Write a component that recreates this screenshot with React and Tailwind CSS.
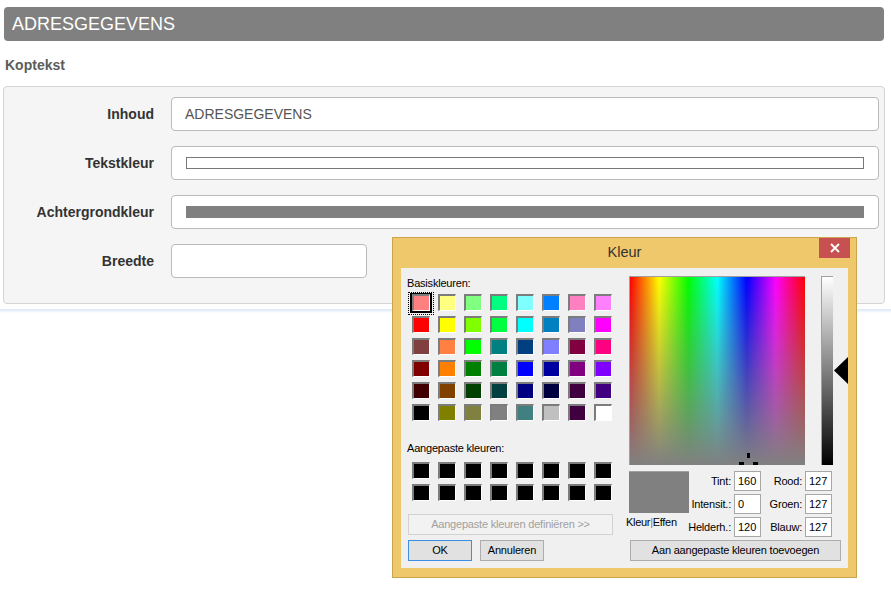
import React from "react";

const BASIC = [
  ["bg-[#ff8080]", "bg-[#ffff80]", "bg-[#80ff80]", "bg-[#00ff80]", "bg-[#80ffff]", "bg-[#0080ff]", "bg-[#ff80c0]", "bg-[#ff80ff]"],
  ["bg-[#ff0000]", "bg-[#ffff00]", "bg-[#80ff00]", "bg-[#00ff40]", "bg-[#00ffff]", "bg-[#0080c0]", "bg-[#8080c0]", "bg-[#ff00ff]"],
  ["bg-[#804040]", "bg-[#ff8040]", "bg-[#00ff00]", "bg-[#008080]", "bg-[#004080]", "bg-[#8080ff]", "bg-[#800040]", "bg-[#ff0080]"],
  ["bg-[#800000]", "bg-[#ff8000]", "bg-[#008000]", "bg-[#008040]", "bg-[#0000ff]", "bg-[#0000a0]", "bg-[#800080]", "bg-[#8000ff]"],
  ["bg-[#400000]", "bg-[#804000]", "bg-[#004000]", "bg-[#004040]", "bg-[#000080]", "bg-[#000040]", "bg-[#400040]", "bg-[#400080]"],
  ["bg-[#000000]", "bg-[#808000]", "bg-[#808040]", "bg-[#808080]", "bg-[#408080]", "bg-[#c0c0c0]", "bg-[#400040]", "bg-[#ffffff]"],
];

function Swatch({ color, selected }) {
  return (
    <div className="relative w-[18px] h-[17px]">
      {selected && (
        <>
          <span className="absolute -left-[4px] -right-[4px] -top-[2px] -bottom-[4px] border border-dotted border-black" />
          <span className="absolute -left-[2px] -right-[2px] -top-[1px] -bottom-[2px] border-2 border-black" />
        </>
      )}
      <div
        className={`relative w-[18px] h-[17px] border-t-2 border-l-2 border-t-[#7c7c7c] border-l-[#7c7c7c] border-r border-b border-r-white border-b-white ${color}`}
      />
    </div>
  );
}

function FormRow({ label, children }) {
  return (
    <div className="flex items-center h-[34px]">
      <div className="w-[150px] text-right text-[14px] font-bold text-[#333]">{label}</div>
      <div className="ml-[17px]">{children}</div>
    </div>
  );
}

function WinButton({ children, className = "" }) {
  return (
    <div
      className={`flex items-center justify-center h-[21px] border text-[11px] tracking-[-0.2px] ${className}`}
    >
      {children}
    </div>
  );
}

function Field({ label, value }) {
  return (
    <>
      <div className="h-[20px] flex items-center justify-end pr-[3px] text-[11px] tracking-[-0.2px] text-black">{label}</div>
      <div className="h-[20px] flex items-center border border-[#a7a7a7] bg-white pl-[3px] text-[11px] text-black">{value}</div>
    </>
  );
}

export default function App() {
  return (
    <div className="relative w-[891px] h-[590px] overflow-hidden bg-white font-['Liberation_Sans',Arial,sans-serif]">
      <div className="ml-[4px] mt-[7px] w-[880px] h-[34px] rounded-[4px] bg-[#808080] px-[8px] text-[18px] leading-[34px] text-white">
        ADRESGEGEVENS
      </div>
      <div className="ml-[5px] mt-[14px] h-[20px] leading-[20px] text-[14px] font-bold text-[#5c5c5c]">Koptekst</div>
      <div className="ml-[3px] mt-[11px] w-[882px] h-[218px] rounded-[4px] border border-[#d5d5d5] bg-[#f5f5f5] pt-[10px] flex flex-col gap-[15px]">
        <FormRow label="Inhoud">
          <div className="flex items-center h-[34px] w-[708px] rounded-[4px] border border-[#bababa] bg-white px-[13px] text-[14px] text-[#555]">
            ADRESGEGEVENS
          </div>
        </FormRow>
        <FormRow label="Tekstkleur">
          <div className="flex items-center h-[34px] w-[708px] rounded-[4px] border border-[#bababa] bg-white px-[14px]">
            <div className="h-[12px] flex-1 border border-[#777] bg-white" />
          </div>
        </FormRow>
        <FormRow label="Achtergrondkleur">
          <div className="flex items-center h-[34px] w-[708px] rounded-[4px] border border-[#bababa] bg-white px-[14px]">
            <div className="h-[12px] flex-1 bg-[#808080]" />
          </div>
        </FormRow>
        <FormRow label="Breedte">
          <div className="h-[34px] w-[196px] rounded-[4px] border border-[#bababa] bg-white" />
        </FormRow>
      </div>
      <div className="mt-[5px] h-[4px] w-full bg-[linear-gradient(to_bottom,#d9e8f8,#ffffff)]" />

      {/* Color dialog */}
      <div className="absolute left-[392px] top-[237px] w-[465px] h-[341px] border border-[#cda44e] bg-[#f0c86c]">
        <div className="relative h-[30px] flex items-center justify-center text-[14.5px] text-[#333]">
          Kleur
          <div className="absolute right-[6px] top-0 w-[31px] h-[20px] bg-[#c75050] flex items-center justify-center">
            <svg width="10" height="10" viewBox="0 0 10 10">
              <path d="M1 1 L9 9 M9 1 L1 9" stroke="white" strokeWidth="1.8" />
            </svg>
          </div>
        </div>
        <div className="ml-[8px] w-[447px] h-[300px] bg-[#f0f0f0] flex pt-[8px] text-black">
          {/* Left column */}
          <div className="w-[228px] pl-[6px] flex flex-col">
            <div className="h-[14px] leading-[14px] text-[11px] tracking-[-0.2px]">Basiskleuren:</div>
            <div className="ml-[5px] mt-[4px] grid grid-cols-[repeat(8,18px)] gap-x-[8px] gap-y-[5px]">
              {BASIC.flat().map((c, i) => (
                <Swatch key={i} color={c} selected={i === 0} />
              ))}
            </div>
            <div className="mt-[20px] h-[14px] leading-[14px] text-[11px] tracking-[-0.2px]">Aangepaste kleuren:</div>
            <div className="ml-[5px] mt-[7px] grid grid-cols-[repeat(8,18px)] gap-x-[8px] gap-y-[5px]">
              {Array.from({ length: 16 }).map((_, i) => (
                <Swatch key={i} color="bg-black" />
              ))}
            </div>
            <WinButton className="ml-[1px] mt-[13px] w-[205px] border-[#d2d2d2] bg-[#f2f2f2] text-[#a0a0a0]">
              Aangepaste kleuren definiëren &gt;&gt;
            </WinButton>
            <div className="ml-[1px] mt-[5px] flex gap-[8px]">
              <WinButton className="w-[64px] border-[#3d8ee0] bg-[#e1e1e1] text-black">OK</WinButton>
              <WinButton className="w-[64px] border-[#adadad] bg-[#e1e1e1] text-black">Annuleren</WinButton>
            </div>
          </div>

          {/* Right column */}
          <div className="flex flex-col">
            <div className="flex">
              <div className="relative w-[176px] h-[189px] border-t border-l border-[#a0a0a0] bg-[linear-gradient(to_bottom,rgba(128,128,128,0),#808080),linear-gradient(to_right,#ff0000,#ffff00,#00ff00,#00ffff,#0000ff,#ff00ff,#ff0000)]">
                <svg className="absolute left-[108px] top-[176px]" width="20" height="12" viewBox="0 0 20 12">
                  <rect x="9" y="0" width="3" height="5" fill="black" />
                  <rect x="1" y="9" width="5" height="3" fill="black" />
                  <rect x="15" y="9" width="5" height="3" fill="black" />
                </svg>
              </div>
              <div className="relative ml-[16px] w-[12px] h-[189px] border-t border-l border-[#a0a0a0] bg-[linear-gradient(to_bottom,#ffffff,#000000)]" />
              <div className="relative w-[15px] h-[189px]">
                <svg className="absolute left-[1px] top-[81px]" width="14" height="27" viewBox="0 0 14 27">
                  <polygon points="0,13.5 14,0 14,27" fill="black" />
                </svg>
              </div>
            </div>
            <div className="mt-[6px] flex">
              <div className="w-[60px] flex flex-col">
                <div className="h-[42px] bg-[#808080] border-t border-[#a0a0a0]" />
                <div className="-ml-[3px] mt-[2px] h-[14px] leading-[14px] text-[11px] tracking-[-0.3px] whitespace-nowrap">
                  Kleur<span className="text-[#7d7a5e]">|</span>Effen
                </div>
              </div>
              <div className="grid grid-cols-[45px_27px_44px_27px] gap-y-[3px]">
                <Field label="Tint:" value="160" />
                <Field label="Rood:" value="127" />
                <Field label="Intensit.:" value="0" />
                <Field label="Groen:" value="127" />
                <Field label="Helderh.:" value="120" />
                <Field label="Blauw:" value="127" />
              </div>
            </div>
            <WinButton className="ml-[1px] mt-[3px] w-[211px] border-[#adadad] bg-[#e1e1e1] text-black">
              Aan aangepaste kleuren toevoegen
            </WinButton>
          </div>
        </div>
      </div>
    </div>
  );
}
